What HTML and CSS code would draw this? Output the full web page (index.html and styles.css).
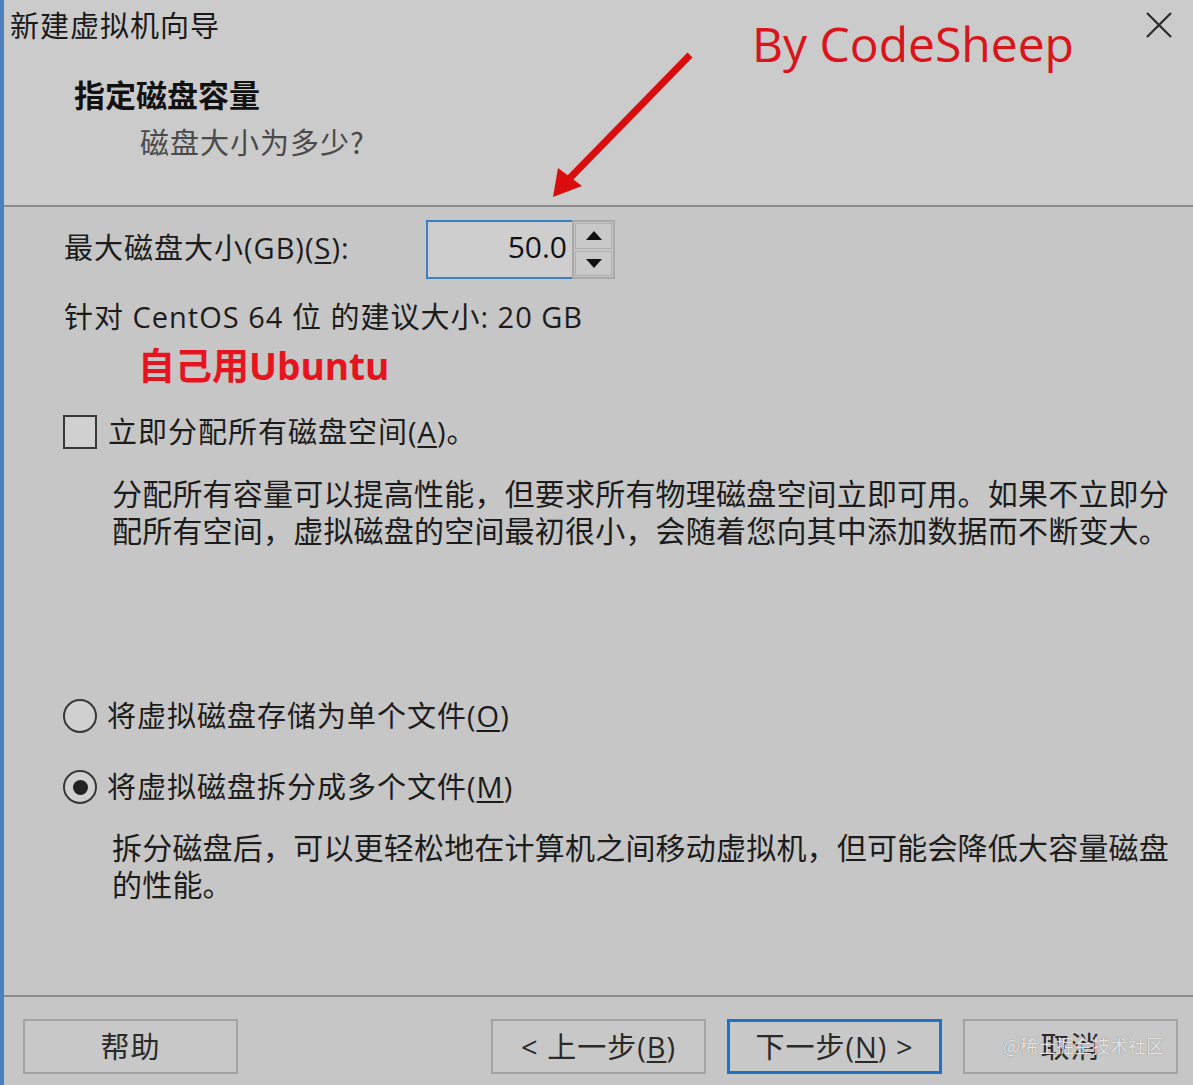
FILE: index.html
```html
<!DOCTYPE html>
<html lang="zh-CN">
<head>
<meta charset="utf-8">
<title>新建虚拟机向导</title>
<link rel="stylesheet" href="styles.css">
</head>
<body>
<div class="dialog">
  <header class="header">
    <div class="titlebar">
      <div class="title">新建虚拟机向导</div>
      <svg class="close" width="26" height="26" viewBox="0 0 26 26"><path d="M1 1L25 25M25 1L1 25" stroke="#2a2a2a" stroke-width="2.2" fill="none"/></svg>
    </div>
    <h1 class="heading">指定磁盘容量</h1>
    <p class="subtitle">磁盘大小为多少?</p>
  </header>

  <main class="content">
    <div class="size-row">
      <label class="size-label">最大磁盘大小(GB)(<u>S</u>):</label>
      <div class="spin">
        <div class="spin-input">50.0</div>
        <div class="spin-buttons">
          <div class="spin-btn"><span class="tri-up"></span></div>
          <div class="spin-btn"><span class="tri-down"></span></div>
        </div>
      </div>
    </div>
    <p class="recommend">针对 CentOS 64 位 的建议大小: 20 GB</p>
    <p class="note">自己用Ubuntu</p>

    <div class="option check-row">
      <span class="checkbox"></span>
      <span class="opt-label">立即分配所有磁盘空间(<u>A</u>)。</span>
    </div>
    <p class="desc">分配所有容量可以提高性能，但要求所有物理磁盘空间立即可用。如果不立即分配所有空间，虚拟磁盘的空间最初很小，会随着您向其中添加数据而不断变大。</p>

    <div class="option radio-row first-radio">
      <span class="radio"></span>
      <span class="opt-label">将虚拟磁盘存储为单个文件(<u>O</u>)</span>
    </div>
    <div class="option radio-row second-radio">
      <span class="radio checked"></span>
      <span class="opt-label">将虚拟磁盘拆分成多个文件(<u>M</u>)</span>
    </div>
    <p class="desc desc2">拆分磁盘后，可以更轻松地在计算机之间移动虚拟机，但可能会降低大容量磁盘的性能。</p>
  </main>

  <footer class="footer">
    <button class="btn">帮助</button>
    <div class="spacer"></div>
    <button class="btn">&lt; 上一步(<u>B</u>)</button>
    <button class="btn primary">下一步(<u>N</u>) &gt;</button>
    <button class="btn">取消</button>
  </footer>

  <div class="annot-title">By CodeSheep</div>
  <svg class="annot-arrow" width="1193" height="220" viewBox="0 0 1193 220">
    <line x1="690" y1="55" x2="568" y2="180" stroke="#d90d0d" stroke-width="7" stroke-linecap="butt"/>
    <polygon points="553,197 558,168 582,186" fill="#d90d0d"/>
  </svg>
  <div class="watermark">@稀土掘金技术社区</div>
</div>
</body>
</html>
```

FILE: styles.css
```css
* { box-sizing: border-box; }
html, body {
  margin: 0;
  padding: 0;
}
body {
  width: 1193px;
  height: 1085px;
  overflow: hidden;
  background: #c6c6c6;
  font-family: "Open Sans", "Noto Sans CJK SC", sans-serif;
  color: #1c1c1c;
}
.dialog {
  position: relative;
  width: 1193px;
  height: 1085px;
  border-left: 4px solid #4a80bf;
  display: flex;
  flex-direction: column;
  background: #c6c6c6;
}
.header {
  height: 207px;
  background: #cbcbcb;
  border-bottom: 2px solid #8c8c8c;
  flex: none;
}
.titlebar {
  display: flex;
  align-items: flex-start;
  justify-content: space-between;
  height: 48px;
  padding-left: 6px;
  padding-right: 21px;
}
.title {
  font-family: "Noto Sans CJK SC", sans-serif;
  font-size: 29px;
  letter-spacing: 1px;
  line-height: 48px;
  color: #1a1a1a;
}
.close {
  margin-top: 12px;
}
.heading {
  margin: 26px 0 0 70px;
  font-family: "Noto Sans CJK SC", sans-serif;
  font-size: 31px;
  font-weight: 700;
  line-height: 40px;
  color: #111;
}
.subtitle {
  margin: 7px 0 0 136px;
  font-family: "Noto Sans CJK SC", sans-serif;
  font-size: 29px;
  letter-spacing: 1px;
  line-height: 40px;
  color: #4a4a4a;
}
.content {
  flex: 1;
  padding-left: 60px;
  padding-top: 13px;
}
.size-row {
  display: flex;
  align-items: center;
  height: 59px;
}
.size-label {
  width: 362px;
  font-size: 29px;
  letter-spacing: 1px;
  line-height: 40px;
  margin-top: -4px;
}
.spin {
  display: flex;
  height: 59px;
}
.spin-input {
  width: 146px;
  height: 59px;
  border: 2px solid #3d7fc3;
  border-right: none;
  background: #cecece;
  text-align: right;
  padding-right: 5px;
  font-size: 30px;
  line-height: 50px;
  color: #111;
}
.spin-buttons {
  width: 43px;
  height: 59px;
  border: 2px solid #a9a9a9;
  display: flex;
  flex-direction: column;
  padding: 1px;
  gap: 2px;
}
.spin-btn {
  flex: 1;
  background: #c9c9c9;
  border: 1px solid #b0b0b0;
  display: flex;
  align-items: center;
  justify-content: center;
}
.tri-up {
  width: 0; height: 0;
  border-left: 8px solid transparent;
  border-right: 8px solid transparent;
  border-bottom: 9px solid #111;
}
.tri-down {
  width: 0; height: 0;
  border-left: 8px solid transparent;
  border-right: 8px solid transparent;
  border-top: 9px solid #111;
}
.recommend {
  margin: 18px 0 0 0;
  font-size: 29px;
  letter-spacing: 1px;
  line-height: 40px;
  color: #1c1c1c;
}
.note {
  margin: 7px 0 0 74px;
  font-size: 37px;
  font-weight: 700;
  line-height: 44px;
  color: #e5141e;
}
.option {
  display: flex;
  align-items: center;
  height: 40px;
}
.check-row {
  margin-top: 24px;
}
.checkbox {
  width: 34px;
  height: 34px;
  margin-left: -1px;
  border: 2px solid #383838;
  background: #d0d0d0;
  margin-right: 11px;
  flex: none;
}
.opt-label {
  font-size: 29px;
  letter-spacing: 1px;
  line-height: 40px;
  color: #1c1c1c;
}
.desc {
  margin: 22px 0 0 48px;
  width: 1070px;
  font-family: "Noto Sans CJK SC", sans-serif;
  font-size: 30px;
  letter-spacing: 0.2px;
  line-height: 37px;
  color: #1c1c1c;
}
.first-radio {
  margin-top: 148px;
}
.second-radio {
  margin-top: 31px;
}
.radio {
  width: 34px;
  height: 34px;
  margin-left: -1px;
  border-radius: 50%;
  border: 2px solid #383838;
  background: #d0d0d0;
  margin-right: 10px;
  flex: none;
  display: flex;
  align-items: center;
  justify-content: center;
}
.radio.checked::after {
  content: "";
  width: 15px;
  height: 15px;
  border-radius: 50%;
  background: #222;
}
.desc2 {
  margin-top: 21px;
}
u {
  text-decoration-thickness: 2px;
  text-underline-offset: 3px;
}
.footer {
  flex: none;
  height: 90px;
  border-top: 2px solid #8c8c8c;
  display: flex;
  align-items: flex-start;
  padding: 22px 15px 0 19px;
  gap: 21px;
}
.spacer {
  flex: 1;
}
.btn {
  width: 215px;
  height: 55px;
  background: #c8c8c8;
  border: 2px solid #a3a3a3;
  font-family: "Open Sans", "Noto Sans CJK SC", sans-serif;
  font-size: 29px;
  letter-spacing: 1px;
  line-height: 40px;
  color: #2a2a2a;
  padding: 0;
}
.btn.primary {
  border: 3px solid #1f72c4;
}
.annot-title {
  position: absolute;
  left: 748px;
  top: 10px;
  font-family: "Open Sans", sans-serif;
  font-size: 48px;
  line-height: 68px;
  color: #d9141b;
}
.annot-arrow {
  position: absolute;
  left: -4px;
  top: 0;
  pointer-events: none;
}
.watermark {
  position: absolute;
  left: 999px;
  top: 1032px;
  font-family: "Noto Sans CJK SC", sans-serif;
  font-size: 18px;
  line-height: 26px;
  color: rgba(245, 245, 245, 0.9);
  text-shadow: 0 0 1px rgba(60, 60, 60, 0.7);
}
```
